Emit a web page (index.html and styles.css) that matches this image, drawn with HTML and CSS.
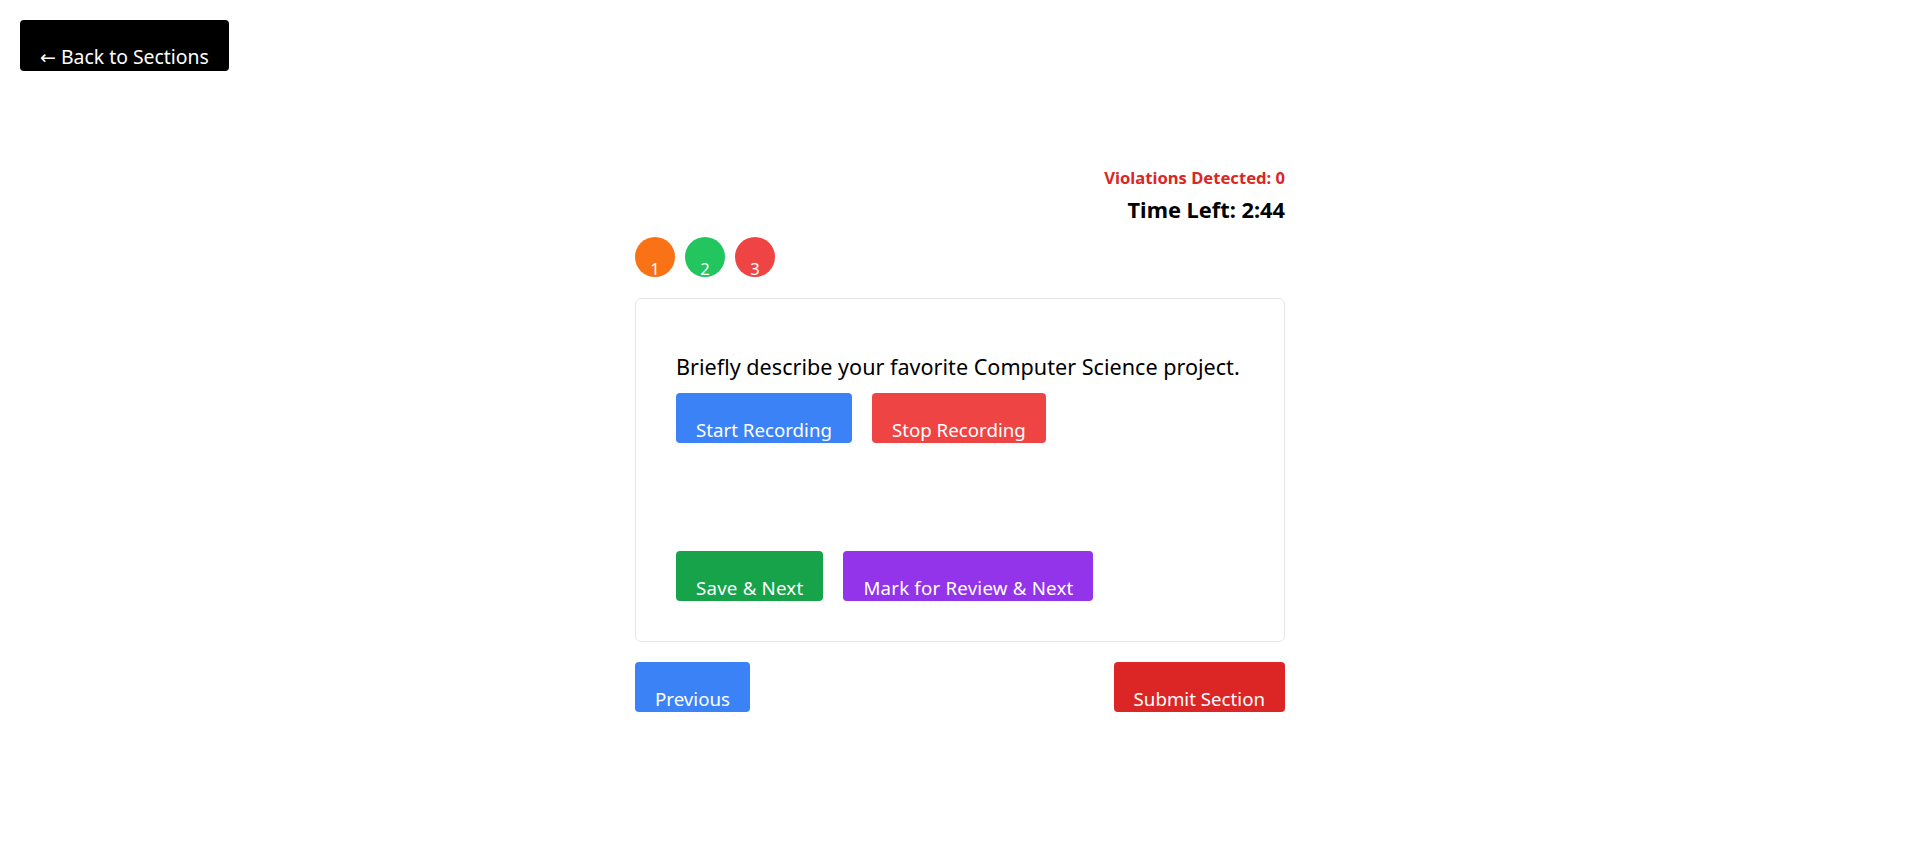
FILE: index.html
```html
<!DOCTYPE html>
<html lang="en">
<head>
<meta charset="utf-8">
<title>Section Test</title>
<link rel="stylesheet" href="styles.css">
</head>
<body>
  <button class="back-btn"><span class="arrow">←</span> Back to Sections</button>
  <main class="page">
    <div class="status">
      <div class="violations">Violations Detected: 0</div>
      <div class="timer">Time Left: 2:44</div>
    </div>
    <div class="palette">
      <span class="qdot qdot-review">1</span>
      <span class="qdot qdot-answered">2</span>
      <span class="qdot qdot-unanswered">3</span>
    </div>
    <section class="card">
      <p class="question">Briefly describe your favorite Computer Science project.</p>
      <div class="btn-row">
        <button class="btn btn-blue">Start Recording</button>
        <button class="btn btn-red">Stop Recording</button>
      </div>
      <div class="btn-row actions">
        <button class="btn btn-green">Save &amp; Next</button>
        <button class="btn btn-purple">Mark for Review &amp; Next</button>
      </div>
    </section>
    <div class="nav-row">
      <button class="btn btn-blue">Previous</button>
      <button class="btn btn-darkred">Submit Section</button>
    </div>
  </main>
</body>
</html>
```

FILE: styles.css
```css
* { box-sizing: border-box; }

html, body {
  margin: 0;
  padding: 0;
  background: #ffffff;
}

body {
  font-family: "Noto Sans", "Open Sans", sans-serif;
  color: #000000;
  padding: 20px 0 0 20px;
}

button {
  font-family: inherit;
  border: none;
  cursor: pointer;
}

.back-btn {
  display: block;
  background: #000000;
  color: #ffffff;
  font-size: 19.4px;
  line-height: 24px;
  padding: 25px 20px 2px;
  border-radius: 4px;
}

.arrow {
  font-family: "DejaVu Sans", sans-serif;
  font-size: 19px;
}

.page {
  width: 650px;
  margin: 95px auto 0;
  position: relative;
  left: -10px;
}

.status {
  text-align: right;
}

.violations {
  color: #dc2626;
  font-weight: 700;
  font-size: 16.6px;
  line-height: 24px;
}

.timer {
  margin-top: 6px;
  font-weight: 700;
  font-size: 21.8px;
  line-height: 28px;
}

.palette {
  display: flex;
  gap: 10px;
  margin-top: 13px;
}

.qdot {
  width: 40px;
  height: 40px;
  border-radius: 50%;
  color: #ffffff;
  font-size: 16.5px;
  line-height: 16px;
  padding-top: 24px;
  text-align: center;
}

.qdot-review { background: #f97316; }
.qdot-answered { background: #22c55e; }
.qdot-unanswered { background: #ef4444; }

.card {
  margin-top: 21px;
  border: 1px solid #e5e7eb;
  border-radius: 6px;
  padding: 40px;
}

.question {
  margin: 14px 0 0;
  font-size: 21.6px;
  line-height: 28px;
  white-space: nowrap;
}

.btn-row {
  display: flex;
  gap: 20px;
  margin-top: 12px;
}

.btn-row.actions {
  margin-top: 108px;
}

.btn {
  color: #ffffff;
  font-size: 18.7px;
  line-height: 24px;
  padding: 25px 20px 1px;
  border-radius: 4px;
}

.btn-green,
.btn-purple {
  letter-spacing: 0.2px;
}

.btn-blue { background: #3b82f6; }
.btn-red { background: #ef4444; }
.btn-green { background: #16a34a; }
.btn-purple { background: #9333ea; }
.btn-darkred { background: #dc2626; }

.nav-row {
  display: flex;
  justify-content: space-between;
  margin-top: 20px;
}
```
